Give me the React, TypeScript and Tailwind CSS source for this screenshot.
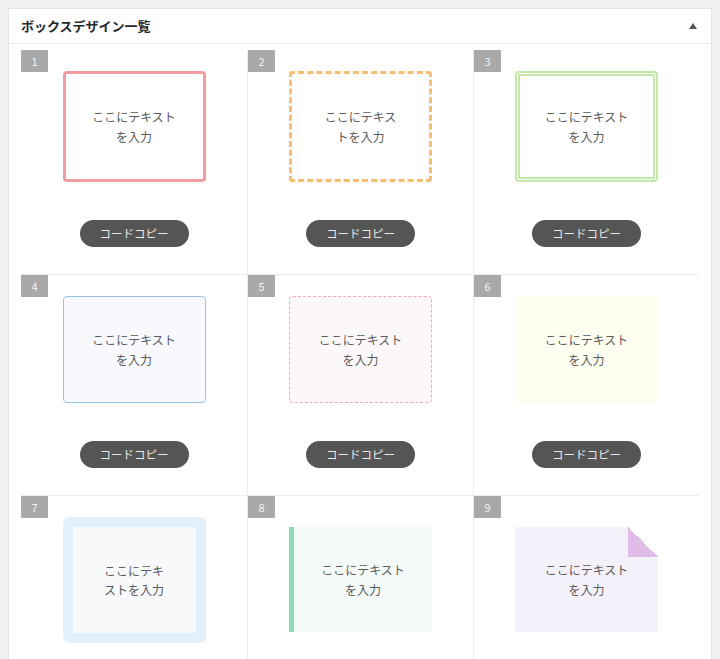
import type { ReactNode } from "react";

type BoxDesign = {
  id: number;
  boxClass: string;
  extra?: ReactNode;
};

// text wraps after 7 characters (6 for #2, 5 for #7), so the inner widths are tuned per box
const boxes: BoxDesign[] = [
  {
    id: 1,
    boxClass: "mt-0 h-[111px] rounded-[4px] border-[3px] border-[#f19ca0] bg-white px-[26px]",
  },
  {
    id: 2,
    boxClass: "mt-0 h-[111px] rounded-[3px] border-[3px] border-dashed border-[#f6be72] bg-white px-[28px]",
  },
  {
    id: 3,
    boxClass: "mt-0 h-[111px] rounded-[4px] border-[5px] border-double border-[#c4e7aa] bg-white px-[24px]",
  },
  {
    id: 4,
    boxClass: "mt-0 h-[107px] rounded-[4px] border border-[#97c4e5] bg-[#f7f9fc] px-[28px]",
  },
  {
    id: 5,
    boxClass: "mt-0 h-[107px] rounded-[4px] border border-dashed border-[#f1a9c3] bg-[#fcf8fa] px-[28px]",
  },
  {
    id: 6,
    boxClass: "mt-0 h-[107px] rounded-[3px] bg-[#fefff1] px-[29px]",
  },
  {
    id: 7,
    boxClass: "mt-0 h-[126px] rounded-[6px] border-[10px] border-[#e1f0fa] bg-[#f8f9fb] px-[28px]",
  },
  {
    id: 8,
    boxClass: "mt-[10px] h-[105px] border-l-[5px] border-[#8fdabb] bg-[#f4faf8] px-[26px]",
  },
  {
    id: 9,
    boxClass: "mt-[10px] h-[105px] bg-[#f5f1fb] px-[29px]",
    extra: (
      <span className="absolute right-0 top-0 h-[30px] w-[30px] bg-[linear-gradient(to_bottom_left,#ffffff_50%,#dfbde8_50%)]" />
    ),
  },
];

function BoxCell({ box, index }: { box: BoxDesign; index: number }) {
  const divider = index % 3 === 0 ? "" : "border-l";

  return (
    <div
      className={`relative flex flex-col items-center border-b border-[#ececec] pb-[27px] pt-[21px] ${divider}`}
    >
      <span className="absolute left-0 top-0 flex h-[22px] w-[27px] items-center justify-center bg-[#a9a9a9] text-[11px] text-[#f4f4f4]">
        {box.id}
      </span>
      <div
        className={`relative box-border flex w-[143px] items-center justify-center text-center text-[12px] leading-[1.6] text-[#5a5a5a] ${box.boxClass}`}
      >
        {box.extra}
        <p className="relative">ここにテキストを入力</p>
      </div>
      <div className="min-h-[38px] flex-1" />
      <button
        type="button"
        className="flex h-[27px] w-[109px] items-center justify-center rounded-full bg-[#555555] text-[11.5px] text-[#e8e8e8]"
      >
        コードコピー
      </button>
    </div>
  );
}

export default function App() {
  return (
    <div
      className="min-h-screen bg-[#f1f1f1] p-2"
      style={{ fontFamily: '"Noto Sans CJK JP", "Noto Sans", sans-serif' }}
    >
      <div className="border border-[#e5e5e5] bg-white">
        <div className="flex h-[35px] items-center justify-between border-b border-[#eeeeee] pl-[12px] pr-[14px]">
          <h2 className="text-[13px] font-bold text-[#23282d]">ボックスデザイン一覧</h2>
          <svg width="8" height="6" viewBox="0 0 8 6" aria-hidden="true">
            <polygon points="4,0 8,6 0,6" fill="#555555" />
          </svg>
        </div>
        <div className="grid grid-cols-3 px-3 pt-[6px]">
          {boxes.map((box, i) => (
            <BoxCell key={box.id} box={box} index={i} />
          ))}
        </div>
      </div>
    </div>
  );
}
